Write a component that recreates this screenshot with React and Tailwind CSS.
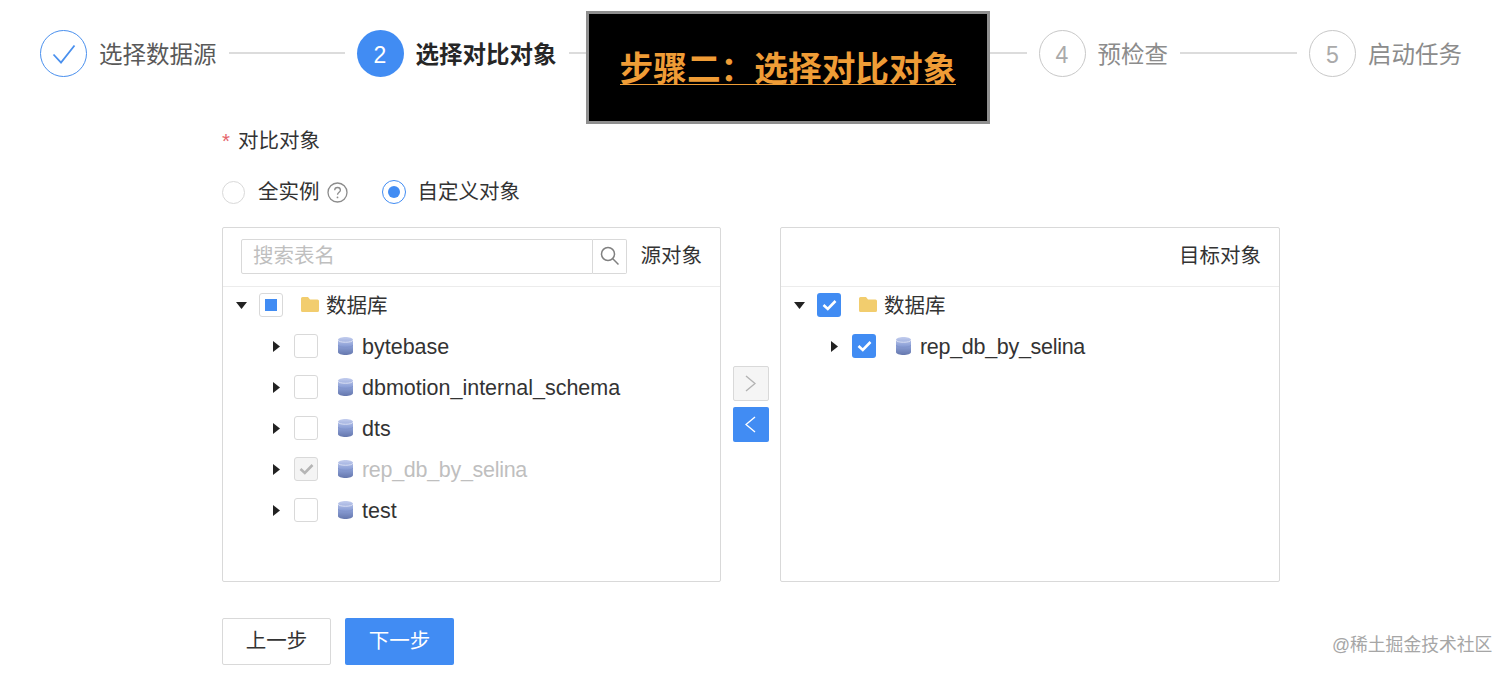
import React from "react";

const FONT = { fontFamily: '"Liberation Sans","Noto Sans CJK SC",sans-serif' };

function Circle({ state, n }) {
  if (state === "done")
    return (
      <div className="w-[47px] h-[47px] shrink-0 rounded-full border-[1.5px] border-[#4a90ee] flex items-center justify-center">
        <svg width="24" height="20" viewBox="0 0 24 20" fill="none" stroke="#4a90ee" strokeWidth="1.8">
          <path d="M1.5 10.5 L9 18.5 L22.5 1.5" />
        </svg>
      </div>
    );
  if (state === "active")
    return (
      <div className="w-[47px] h-[47px] shrink-0 rounded-full bg-[#418cf3] text-white flex items-center justify-center text-[23px] pt-[3px]">
        {n}
      </div>
    );
  return (
    <div className="w-[47px] h-[47px] shrink-0 rounded-full border-[1.5px] border-[#c8c8c8] text-[#aaaaaa] flex items-center justify-center text-[23px] pt-[3px]">
      {n}
    </div>
  );
}

function Step({ state, n, label, line }) {
  return (
    <div className="flex items-center">
      <Circle state={state} n={n} />
      <span
        className={
          "ml-[12px] h-[47px] pt-[3px] text-[23.5px] leading-[44px] whitespace-nowrap " +
          (state === "active" ? "font-bold text-[#262626]" : state === "done" ? "text-[#595959]" : "text-[#8c8c8c]")
        }
      >
        {label}
      </span>
      {line ? <div className="ml-[12px] mr-[12px] h-[1.5px] bg-[#dcdcdc] mt-[-1px]" style={{ width: line }} /> : null}
    </div>
  );
}

function Caret({ down }) {
  return down ? (
    <svg width="11" height="7" viewBox="0 0 11 7" className="shrink-0">
      <path d="M0 0 H11 L5.5 7 Z" fill="#222" />
    </svg>
  ) : (
    <svg width="7" height="11" viewBox="0 0 7 11" className="shrink-0">
      <path d="M0 0 V11 L7 5.5 Z" fill="#222" />
    </svg>
  );
}

function Check({ color = "#fff" }) {
  return (
    <svg width="15" height="12" viewBox="0 0 15 12" fill="none" stroke={color} strokeWidth="2.6">
      <path d="M1.5 6 L5.8 10 L13.5 2" />
    </svg>
  );
}

function Box({ kind }) {
  if (kind === "checked")
    return (
      <div className="w-[24px] h-[24px] shrink-0 rounded-[3px] bg-[#418cf3] flex items-center justify-center mt-[-1px]">
        <Check />
      </div>
    );
  if (kind === "half")
    return (
      <div className="w-[24px] h-[24px] shrink-0 rounded-[3px] border border-[#d9d9d9] bg-white flex items-center justify-center mt-[-1px]">
        <div className="w-[12px] h-[12px] bg-[#418cf3]" />
      </div>
    );
  if (kind === "disabled")
    return (
      <div className="w-[24px] h-[24px] shrink-0 rounded-[3px] border border-[#d9d9d9] bg-[#f4f4f4] flex items-center justify-center mt-[-1px]">
        <Check color="#b5b5b5" />
      </div>
    );
  return <div className="w-[24px] h-[24px] shrink-0 rounded-[3px] border border-[#d9d9d9] bg-white mt-[-1px]" />;
}

function Folder() {
  return (
    <svg width="18" height="15" viewBox="0 0 18 15" className="shrink-0 mt-[-3px]">
      <path d="M0 1.5 Q0 0 1.5 0 H7 L9 2.5 H16.5 Q18 2.5 18 4 V13.5 Q18 15 16.5 15 H1.5 Q0 15 0 13.5 Z" fill="#f2cd6e" />
    </svg>
  );
}

function Db({ id }) {
  return (
    <svg width="15" height="18" viewBox="0 0 15 18" className="shrink-0 mt-[-2px]">
      <defs>
        <linearGradient id={id} x1="0" y1="0" x2="0" y2="1">
          <stop offset="0" stopColor="#c3cdee" />
          <stop offset="0.5" stopColor="#8b9fd6" />
          <stop offset="1" stopColor="#6577ad" />
        </linearGradient>
      </defs>
      <path d="M0 3 C0 -1 15 -1 15 3 V15 C15 19 0 19 0 15 Z" fill={`url(#${id})`} />
      <path d="M0 3 C0 6 15 6 15 3" fill="none" stroke="#e4e9f8" strokeWidth="0.8" />
      <path d="M0 8 C0 11 15 11 15 8" fill="none" stroke="#7c8fc8" strokeWidth="0.6" />
    </svg>
  );
}

function RootRow({ kind }) {
  return (
    <div className="h-[41px] flex items-center pl-[13px]">
      <Caret down />
      <div className="w-[12px] shrink-0" />
      <Box kind={kind} />
      <div className="w-[18px] shrink-0" />
      <Folder />
      <span className="ml-[7px] mt-[2px] text-[20.5px] text-[#333]">数据库</span>
    </div>
  );
}

function ChildRow({ kind, name, id, dim, tight }) {
  return (
    <div className="h-[41px] flex items-center pl-[50px]">
      <Caret />
      <div className="w-[14px] shrink-0" />
      <Box kind={kind} />
      <div className="w-[20px] shrink-0" />
      <Db id={id} />
      <span
        className={
          "ml-[9px] mt-[2px] text-[21.5px] " +
          (tight ? "tracking-[-0.3px] " : "") +
          (dim ? "text-[#bfbfbf]" : "text-[#333]")
        }
      >
        {name}
      </span>
    </div>
  );
}

export default function App() {
  return (
    <div className="relative w-[1512px] h-[676px] overflow-hidden bg-white" style={FONT}>
      <div className="flex items-center pl-[40px] pt-[30px]">
        <Step state="done" n="1" label="选择数据源" line={116} />
        <Step state="active" n="2" label="选择对比对象" line={458} />
        <Step state="todo" n="4" label="预检查" line={117} />
        <Step state="todo" n="5" label="启动任务" />
      </div>

      <div className="absolute left-[586px] top-[11px] w-[404px] h-[113px] bg-black border-[3px] border-[#8f8f8f] flex items-center justify-center">
        <span className="text-[33.7px] leading-[30px] font-bold text-[#ef9c36] border-b border-[#ef9c36] whitespace-nowrap mt-[4px]">
          步骤二：选择对比对象
        </span>
      </div>

      <div className="ml-[222px] w-[1058px]">
        <div className="mt-[50px] h-[28px] flex items-center text-[20.5px] text-[#333]">
          <span className="text-[#e5646b] w-[16px]">*</span>
          <span>对比对象</span>
        </div>

        <div className="mt-[23px] h-[28px] flex items-center text-[20.5px] text-[#333]">
          <div className="w-[23px] h-[23px] rounded-full border border-[#d9d9d9] shrink-0" />
          <span className="ml-[13px]">全实例</span>
          <svg width="21" height="21" viewBox="0 0 21 21" fill="none" className="ml-[7px] shrink-0">
            <circle cx="10.5" cy="10.5" r="9.5" stroke="#8c8c8c" strokeWidth="1.3" />
            <path d="M7.7 8.2 C7.7 4.6 13.4 4.6 13.4 8.2 C13.4 10.3 10.5 10.2 10.5 12.8" stroke="#8c8c8c" strokeWidth="1.3" />
            <circle cx="10.5" cy="15.4" r="0.9" fill="#8c8c8c" />
          </svg>
          <div className="ml-[34px] w-[24px] h-[24px] rounded-full border-[1.5px] border-[#418cf3] shrink-0 flex items-center justify-center">
            <div className="w-[12px] h-[12px] rounded-full bg-[#418cf3]" />
          </div>
          <span className="ml-[12px]">自定义对象</span>
        </div>

        <div className="mt-[21px] flex items-stretch h-[355px]">
          <div className="w-[499px] border border-[#d9d9d9] rounded-[2px]">
            <div className="h-[59px] border-b border-[#ececec] flex items-center pl-[18px] pr-[17px] pb-[2px]">
              <div className="flex h-[35px] w-[386px]">
                <div className="w-[352px] border border-[#d9d9d9] rounded-l-[2px] flex items-center pl-[11px] text-[20.5px] text-[#bfbfbf]">
                  搜索表名
                </div>
                <div className="w-[34px] border border-l-0 border-[#d9d9d9] rounded-r-[2px] flex items-center justify-center">
                  <svg width="20" height="20" viewBox="0 0 20 20" fill="none" stroke="#808080" strokeWidth="1.5">
                    <circle cx="8" cy="8" r="6.5" />
                    <path d="M12.8 12.8 L18.5 18.5" />
                  </svg>
                </div>
              </div>
              <span className="ml-auto mr-px text-[20.5px] text-[#333]">源对象</span>
            </div>
            <div className="mt-[-2px]">
              <RootRow kind="half" />
              <ChildRow name="bytebase" id="d1" />
              <ChildRow name="dbmotion_internal_schema" id="d2" />
              <ChildRow name="dts" id="d3" />
              <ChildRow kind="disabled" name="rep_db_by_selina" id="d4" dim tight />
              <ChildRow name="test" id="d5" />
            </div>
          </div>

          <div className="w-[59px] flex flex-col items-center justify-center gap-[6px] pb-[1px]">
            <div className="w-[36px] h-[35px] rounded-[2px] border border-[#d9d9d9] bg-[#f5f5f5] flex items-center justify-center">
              <svg width="11" height="17" viewBox="0 0 11 17" fill="none" stroke="#b3b3b3" strokeWidth="1.4">
                <path d="M1 1 L10 8.5 L1 16" />
              </svg>
            </div>
            <div className="w-[36px] h-[35px] rounded-[2px] bg-[#418cf3] flex items-center justify-center">
              <svg width="11" height="17" viewBox="0 0 11 17" fill="none" stroke="#fff" strokeWidth="1.4">
                <path d="M10 1 L1 8.5 L10 16" />
              </svg>
            </div>
          </div>

          <div className="w-[500px] border border-[#d9d9d9] rounded-[2px]">
            <div className="h-[59px] border-b border-[#ececec] flex items-center justify-end pr-[18px] pb-[2px]">
              <span className="text-[20.5px] text-[#333]">目标对象</span>
            </div>
            <div className="mt-[-2px]">
              <RootRow kind="checked" />
              <ChildRow kind="checked" name="rep_db_by_selina" id="d6" tight />
            </div>
          </div>
        </div>

        <div className="mt-[36px] flex gap-[14px]">
          <div className="w-[109px] h-[47px] rounded-[2px] border border-[#d9d9d9] flex items-center justify-center text-[20.5px] text-[#333]">
            上一步
          </div>
          <div className="w-[109px] h-[47px] rounded-[2px] bg-[#418cf3] flex items-center justify-center text-[20.5px] text-white">
            下一步
          </div>
        </div>
      </div>

      <div className="absolute left-[1332px] top-[634px] text-[17.8px] leading-[22px] text-[#a6a6a6] whitespace-nowrap">
        @稀土掘金技术社区
      </div>
    </div>
  );
}
